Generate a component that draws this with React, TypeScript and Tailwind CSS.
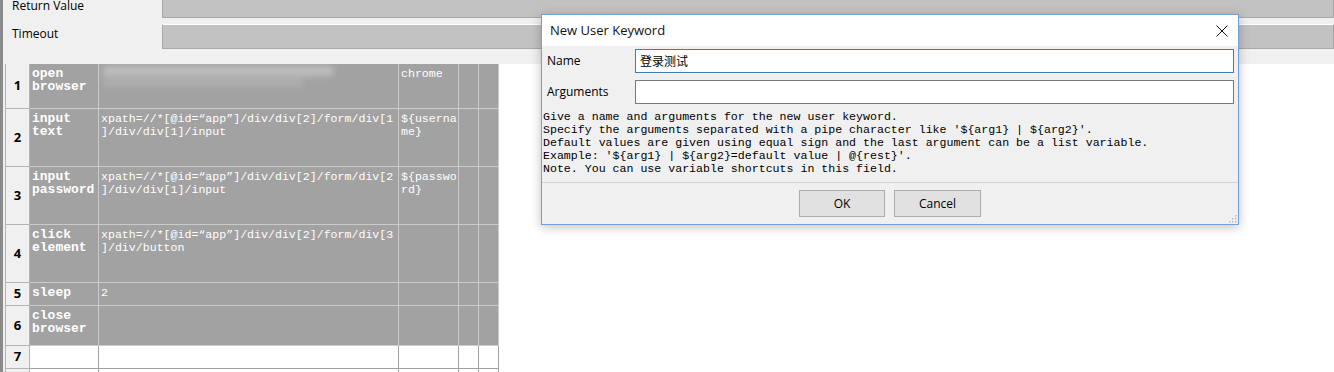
import React from "react";

interface Row {
  n: number;
  h: string;
  kw?: string[];
  arg1?: string[];
  arg2?: string[];
  blur?: boolean;
  empty?: boolean;
  hideNum?: boolean;
}

const rows: Row[] = [
  { n: 1, h: "h-[45px]", kw: ["open", "browser"], blur: true, arg2: ["chrome"] },
  {
    n: 2,
    h: "h-[58px]",
    kw: ["input", "text"],
    arg1: ["xpath=//*[@id=“app”]/div/div[2]/form/div[1", "]/div/div[1]/input"],
    arg2: ["${userna", "me}"],
  },
  {
    n: 3,
    h: "h-[58px]",
    kw: ["input", "password"],
    arg1: ["xpath=//*[@id=“app”]/div/div[2]/form/div[2", "]/div/div[1]/input"],
    arg2: ["${passwo", "rd}"],
  },
  {
    n: 4,
    h: "h-[58px]",
    kw: ["click", "element"],
    arg1: ["xpath=//*[@id=“app”]/div/div[2]/form/div[3", "]/div/button"],
  },
  { n: 5, h: "h-[23px]", kw: ["sleep"], arg1: ["2"] },
  { n: 6, h: "h-[40px]", kw: ["close", "browser"] },
  { n: 7, h: "h-[23px]", empty: true },
  { n: 8, h: "h-[23px]", empty: true, hideNum: true },
];

const helpLines = [
  "Give a name and arguments for the new user keyword.",
  "Specify the arguments separated with a pipe character like '${arg1} | ${arg2}'.",
  "Default values are given using equal sign and the last argument can be a list variable.",
  "Example: '${arg1} | ${arg2}=default value | @{rest}'.",
  "Note. You can use variable shortcuts in this field.",
];

const Lines: React.FC<{ lines?: string[]; bold?: boolean }> = ({ lines, bold }) => (
  <div
    className={`pl-[2px] pt-[3px] leading-[13px] text-white whitespace-pre font-['Liberation_Mono','DejaVu_Sans_Mono',monospace] ${
      bold ? "font-bold text-[13px]" : "text-[11.6px]"
    }`}
  >
    {(lines || []).map((l, i) => (
      <div key={i}>{l}</div>
    ))}
  </div>
);

const GridRow: React.FC<{ row: Row }> = ({ row }) => {
  const cell = row.empty
    ? "bg-white border-r border-b border-[#a0a0a0]"
    : "bg-[#a2a2a2] border-r border-b border-[#cbcbcb]";
  return (
    <div className={`flex ${row.h}`}>
      <div className="w-[25px] shrink-0 flex items-center justify-center border-l border-r border-b border-[#b4b4b4] bg-[#f0f0f0] text-[13px] font-bold text-black font-['Open_Sans','Noto_Sans',sans-serif]">
        {row.hideNum ? "" : row.n}
      </div>
      <div className={`w-[69px] shrink-0 ${cell}`}>
        <Lines lines={row.kw} bold />
      </div>
      <div className={`w-[300px] shrink-0 overflow-hidden ${cell}`}>
        {row.blur ? (
          <div className="pl-[4px] pt-[2px]">
            <div className="h-[10px] w-[230px] bg-white/30 blur-[3px]" />
            <div className="h-[8px] w-[200px] mt-[2px] bg-white/15 blur-[3px]" />
          </div>
        ) : (
          <Lines lines={row.arg1} />
        )}
      </div>
      <div className={`w-[60px] shrink-0 overflow-hidden ${cell}`}>
        <Lines lines={row.arg2} />
      </div>
      <div className={`w-[20px] shrink-0 ${cell}`} />
      <div className={`w-[20px] shrink-0 ${cell}`} />
    </div>
  );
};

const CloseIcon = () => (
  <svg width="12" height="12" viewBox="0 0 12 12">
    <path d="M0.5 0.5 L11.5 11.5 M11.5 0.5 L0.5 11.5" stroke="#111" strokeWidth="1" />
  </svg>
);

const Grip = () => (
  <svg width="10" height="10" viewBox="0 0 10 10">
    {[
      [8, 2],
      [8, 5],
      [5, 5],
      [8, 8],
      [5, 8],
      [2, 8],
    ].map(([x, y], i) => (
      <rect key={i} x={x} y={y} width="1.5" height="1.5" fill="#b8b8b8" />
    ))}
  </svg>
);

const Dialog: React.FC = () => (
  <div className="absolute left-[538px] top-[14px] w-[698px] h-[211px] border border-[#6fa3d8] bg-[#f0f0f0] shadow-[0_2px_10px_rgba(0,0,0,0.25)] flex flex-col font-['Open_Sans','Noto_Sans',sans-serif]">
    <div className="h-[31px] bg-white flex items-center justify-between pl-[8px] pr-[10px] shrink-0">
      <span className="text-[13px] text-[#111]">New User Keyword</span>
      <CloseIcon />
    </div>
    <div className="flex flex-col pt-[3px] flex-1 relative">
      <div className="flex items-center h-[24px]">
        <span className="w-[93px] pl-[5px] text-[12px] text-black">Name</span>
        <div className="flex-1 mr-[4px] h-[24px] border border-[#3c7fb1] bg-white flex items-center pl-[4px] text-[12px] text-black font-['Noto_Sans_CJK_SC',sans-serif]">
          登录测试
        </div>
      </div>
      <div className="flex items-center h-[24px] mt-[7px]">
        <span className="w-[93px] pl-[5px] text-[12px] text-black">Arguments</span>
        <div className="flex-1 mr-[4px] h-[24px] border border-[#7a7a7a] bg-white" />
      </div>
      <div className="mt-[6px] pl-[1px] text-[11.6px] leading-[13px] text-black whitespace-pre font-['Liberation_Mono','DejaVu_Sans_Mono',monospace]">
        {helpLines.map((l, i) => (
          <div key={i}>{l}</div>
        ))}
      </div>
      <div className="mt-[7px] border-t border-[#d4d4d4]" />
      <div className="flex justify-center gap-[9px] mt-[7px]">
        <button className="w-[86px] h-[27px] bg-[#e1e1e1] border border-[#adadad] text-[12px] text-black">
          OK
        </button>
        <button className="w-[87px] h-[27px] bg-[#e1e1e1] border border-[#adadad] text-[12px] text-black">
          Cancel
        </button>
      </div>
      <div className="absolute right-[1px] bottom-[1px]">
        <Grip />
      </div>
    </div>
  </div>
);

export default function App() {
  return (
    <div className="relative w-[1334px] h-[372px] overflow-hidden bg-white border-l-[3px] border-[#8a8a8a] font-['Open_Sans','Noto_Sans',sans-serif]">
      <div className="h-[64px] bg-[#f0f0f0] overflow-hidden">
        <div className="-mt-[6px] flex flex-col gap-[6px]">
          <div className="flex items-center h-[24px]">
            <span className="w-[159px] pl-[9px] text-[12px] text-black">Return Value</span>
            <div className="flex-1 h-[24px] border border-[#a8a8a8] border-t-white bg-[#c2c2c2]" />
          </div>
          <div className="flex items-center h-[25px]">
            <span className="w-[159px] pl-[9px] text-[12px] text-black -mt-[5px]">Timeout</span>
            <div className="flex-1 h-[25px] border border-[#a8a8a8] border-t-white bg-[#c2c2c2]" />
          </div>
        </div>
      </div>
      <div className="flex">
        <div className="w-[2px] bg-[#f0f0f0] self-stretch" />
        <div className="flex flex-col">
          {rows.map((r) => (
            <GridRow key={r.n} row={r} />
          ))}
        </div>
      </div>
      <Dialog />
    </div>
  );
}
